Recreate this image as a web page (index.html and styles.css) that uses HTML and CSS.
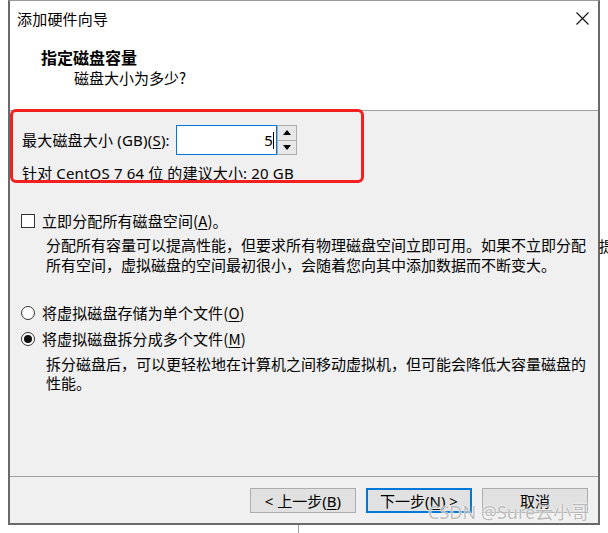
FILE: index.html
```html
<!DOCTYPE html>
<html lang="zh-CN">
<head>
<meta charset="utf-8">
<title>添加硬件向导</title>
<link rel="stylesheet" href="styles.css">
</head>
<body>
<div class="dialog">
  <div class="titlebar">
    <span class="title">添加硬件向导</span>
    <svg class="close" width="13" height="13" viewBox="0 0 13 13"><path d="M0.5 0.5 L12.5 12.5 M12.5 0.5 L0.5 12.5" stroke="#111" stroke-width="1.1" fill="none"/></svg>
  </div>
  <div class="header">
    <div class="h-title">指定磁盘容量</div>
    <div class="h-sub">磁盘大小为多少?</div>
  </div>
  <div class="content">
    <div class="annot"></div>
    <div class="size-row">
      <span class="label">最大磁盘大小 (GB)(<u>S</u>):</span>
      <div class="input"><span>5</span><span class="caret"></span></div>
      <div class="spin">
        <div class="spin-btn"><svg width="8" height="5" viewBox="0 0 8 5"><path d="M0 5 L4 0 L8 5 Z" fill="#000"/></svg></div>
        <div class="spin-btn"><svg width="8" height="5" viewBox="0 0 8 5"><path d="M0 0 L8 0 L4 5 Z" fill="#000"/></svg></div>
      </div>
    </div>
    <div class="rec">针对 CentOS 7 64 位 的建议大小: 20 GB</div>
    <div class="opt-row check">
      <span class="checkbox"></span>
      <span>立即分配所有磁盘空间(<u>A</u>)。</span>
    </div>
    <p class="desc d1">分配所有容量可以提高性能，但要求所有物理磁盘空间立即可用。如果不立即分配<br>所有空间，虚拟磁盘的空间最初很小，会随着您向其中添加数据而不断变大。</p>
    <div class="opt-row r1">
      <span class="radio"></span>
      <span>将虚拟磁盘存储为单个文件(<u>O</u>)</span>
    </div>
    <div class="opt-row r2">
      <span class="radio on"></span>
      <span>将虚拟磁盘拆分成多个文件(<u>M</u>)</span>
    </div>
    <p class="desc d2">拆分磁盘后，可以更轻松地在计算机之间移动虚拟机，但可能会降低大容量磁盘的<br>性能。</p>
  </div>
  <div class="footer">
    <button class="btn">&lt; 上一步(<u>B</u>)</button>
    <button class="btn default">下一步(<u>N</u>) &gt;</button>
    <button class="btn">取消</button>
  </div>
</div>
<div class="below"><span class="tick"></span></div>
<span class="stray">提</span>
<div class="watermark">CSDN @Sure云小哥</div>
</body>
</html>
```
FILE: styles.css
```css
* { box-sizing: border-box; }
html, body { margin: 0; padding: 0; }
body {
  width: 608px;
  height: 533px;
  overflow: hidden;
  background: #fff;
  font-family: "Noto Sans", "Noto Sans CJK SC", sans-serif;
  font-size: 15px;
  color: #000;
  position: relative;
}
u { text-decoration: underline; text-underline-offset: 2px; }

.dialog {
  margin-left: 8px;
  width: 592px;
  height: 525px;
  border: 2px solid #6a6a6a;
  border-top: 1px solid #9a9a9a;
  display: flex;
  flex-direction: column;
  background: #f0f0f0;
  position: relative;
  z-index: 1;
}

.titlebar {
  height: 35px;
  background: #fff;
  display: flex;
  align-items: center;
  justify-content: space-between;
  padding: 0 9px 0 7px;
}
.title { font-family: "Noto Sans CJK SC", sans-serif; font-size: 15px; line-height: 20px; letter-spacing: 0.2px; }
.close { display: block; }

.header {
  height: 75px;
  background: #fff;
  border-bottom: 1px solid #a0a0a0;
  padding-top: 11px;
}
.h-title {
  font-family: "Noto Sans CJK SC", sans-serif;
  font-weight: bold;
  font-size: 16px;
  line-height: 20px;
  padding-left: 31px;
}
.h-sub {
  font-family: "Noto Sans CJK SC", sans-serif;
  font-size: 15px;
  line-height: 21px;
  padding-left: 64px;
}

.content {
  position: relative;
  height: 365px;
  padding: 14px 0 0 12px;
}
.annot {
  position: absolute;
  left: 0;
  top: -2px;
  width: 354px;
  height: 74px;
  border: 3px solid #f2201f;
  border-radius: 6px;
  pointer-events: none;
}

.size-row {
  display: flex;
  align-items: center;
  height: 30px;
}
.label { line-height: 20px; margin-right: 6px; letter-spacing: 0.2px; }
.input {
  width: 101px;
  height: 30px;
  background: #fff;
  border: 1px solid #0078d7;
  display: flex;
  align-items: center;
  justify-content: flex-end;
  padding-right: 2px;
  font-size: 15px;
}
.caret { width: 1px; height: 17px; background: #000; }
.spin {
  width: 20px;
  height: 30px;
  border: 1px solid #adadad;
  display: flex;
  flex-direction: column;
  background: #e8e8e8;
}
.spin-btn {
  flex: 1;
  display: flex;
  align-items: center;
  justify-content: center;
  border-bottom: 1px solid #adadad;
}
.spin-btn:last-child { border-bottom: none; }
.spin-btn svg { display: block; }

.rec { margin-top: 8px; line-height: 20px; letter-spacing: 0.15px; }

.opt-row {
  display: flex;
  align-items: center;
  line-height: 20px;
  font-family: "Noto Sans CJK SC", sans-serif;
  letter-spacing: 0.1px;
}
.opt-row.check { margin-top: 28px; }
.opt-row.r1 { margin-top: 28px; }
.opt-row.r2 { margin-top: 6px; }
.checkbox {
  width: 14px;
  height: 14px;
  border: 1px solid #333;
  background: #fff;
  margin: 0 7px 0 -1px;
}
.radio {
  width: 14px;
  height: 14px;
  border: 1px solid #333;
  border-radius: 50%;
  background: #fff;
  margin: 0 7px 0 -1px;
  display: flex;
  align-items: center;
  justify-content: center;
}
.radio.on::after {
  content: "";
  width: 8px;
  height: 8px;
  border-radius: 50%;
  background: #111;
}

.desc {
  margin: 4px 0 0 24px;
  white-space: nowrap;
  line-height: 20px;
  font-family: "Noto Sans CJK SC", sans-serif;
  letter-spacing: 0;
}
.desc.d2 { margin-top: 5px; line-height: 19px; }

.footer {
  flex: 1;
  border-top: 1px solid #a0a0a0;
  display: flex;
  justify-content: flex-end;
  align-items: flex-start;
  gap: 10px;
  padding: 11px 10px 0 0;
}
.btn {
  width: 106px;
  height: 25px;
  background: #e1e1e1;
  border: 1px solid #adadad;
  font-family: "Noto Sans", "Noto Sans CJK SC", sans-serif;
  font-size: 15px;
  color: #000;
  padding: 0;
  line-height: 20px;
}
.btn.default { border: 2px solid #0078d7; }

.below { height: 8px; position: relative; }
.tick {
  position: absolute;
  left: 298px;
  top: 0;
  width: 1px;
  height: 8px;
  background: #9a9a9a;
}
.stray {
  position: absolute;
  left: 599px;
  top: 236px;
  z-index: 2;
  font-family: "Noto Sans CJK SC", sans-serif;
  font-size: 15px;
  line-height: 20px;
}
.watermark {
  position: absolute;
  left: 428px;
  top: 501px;
  z-index: 3;
  font-family: "Noto Sans", "Noto Sans CJK SC", sans-serif;
  font-size: 18px;
  line-height: 22px;
  color: rgba(120, 120, 120, 0.5);
  text-shadow: 0 0 1px #fff, 0 0 2px #fff;
  white-space: nowrap;
}
```
